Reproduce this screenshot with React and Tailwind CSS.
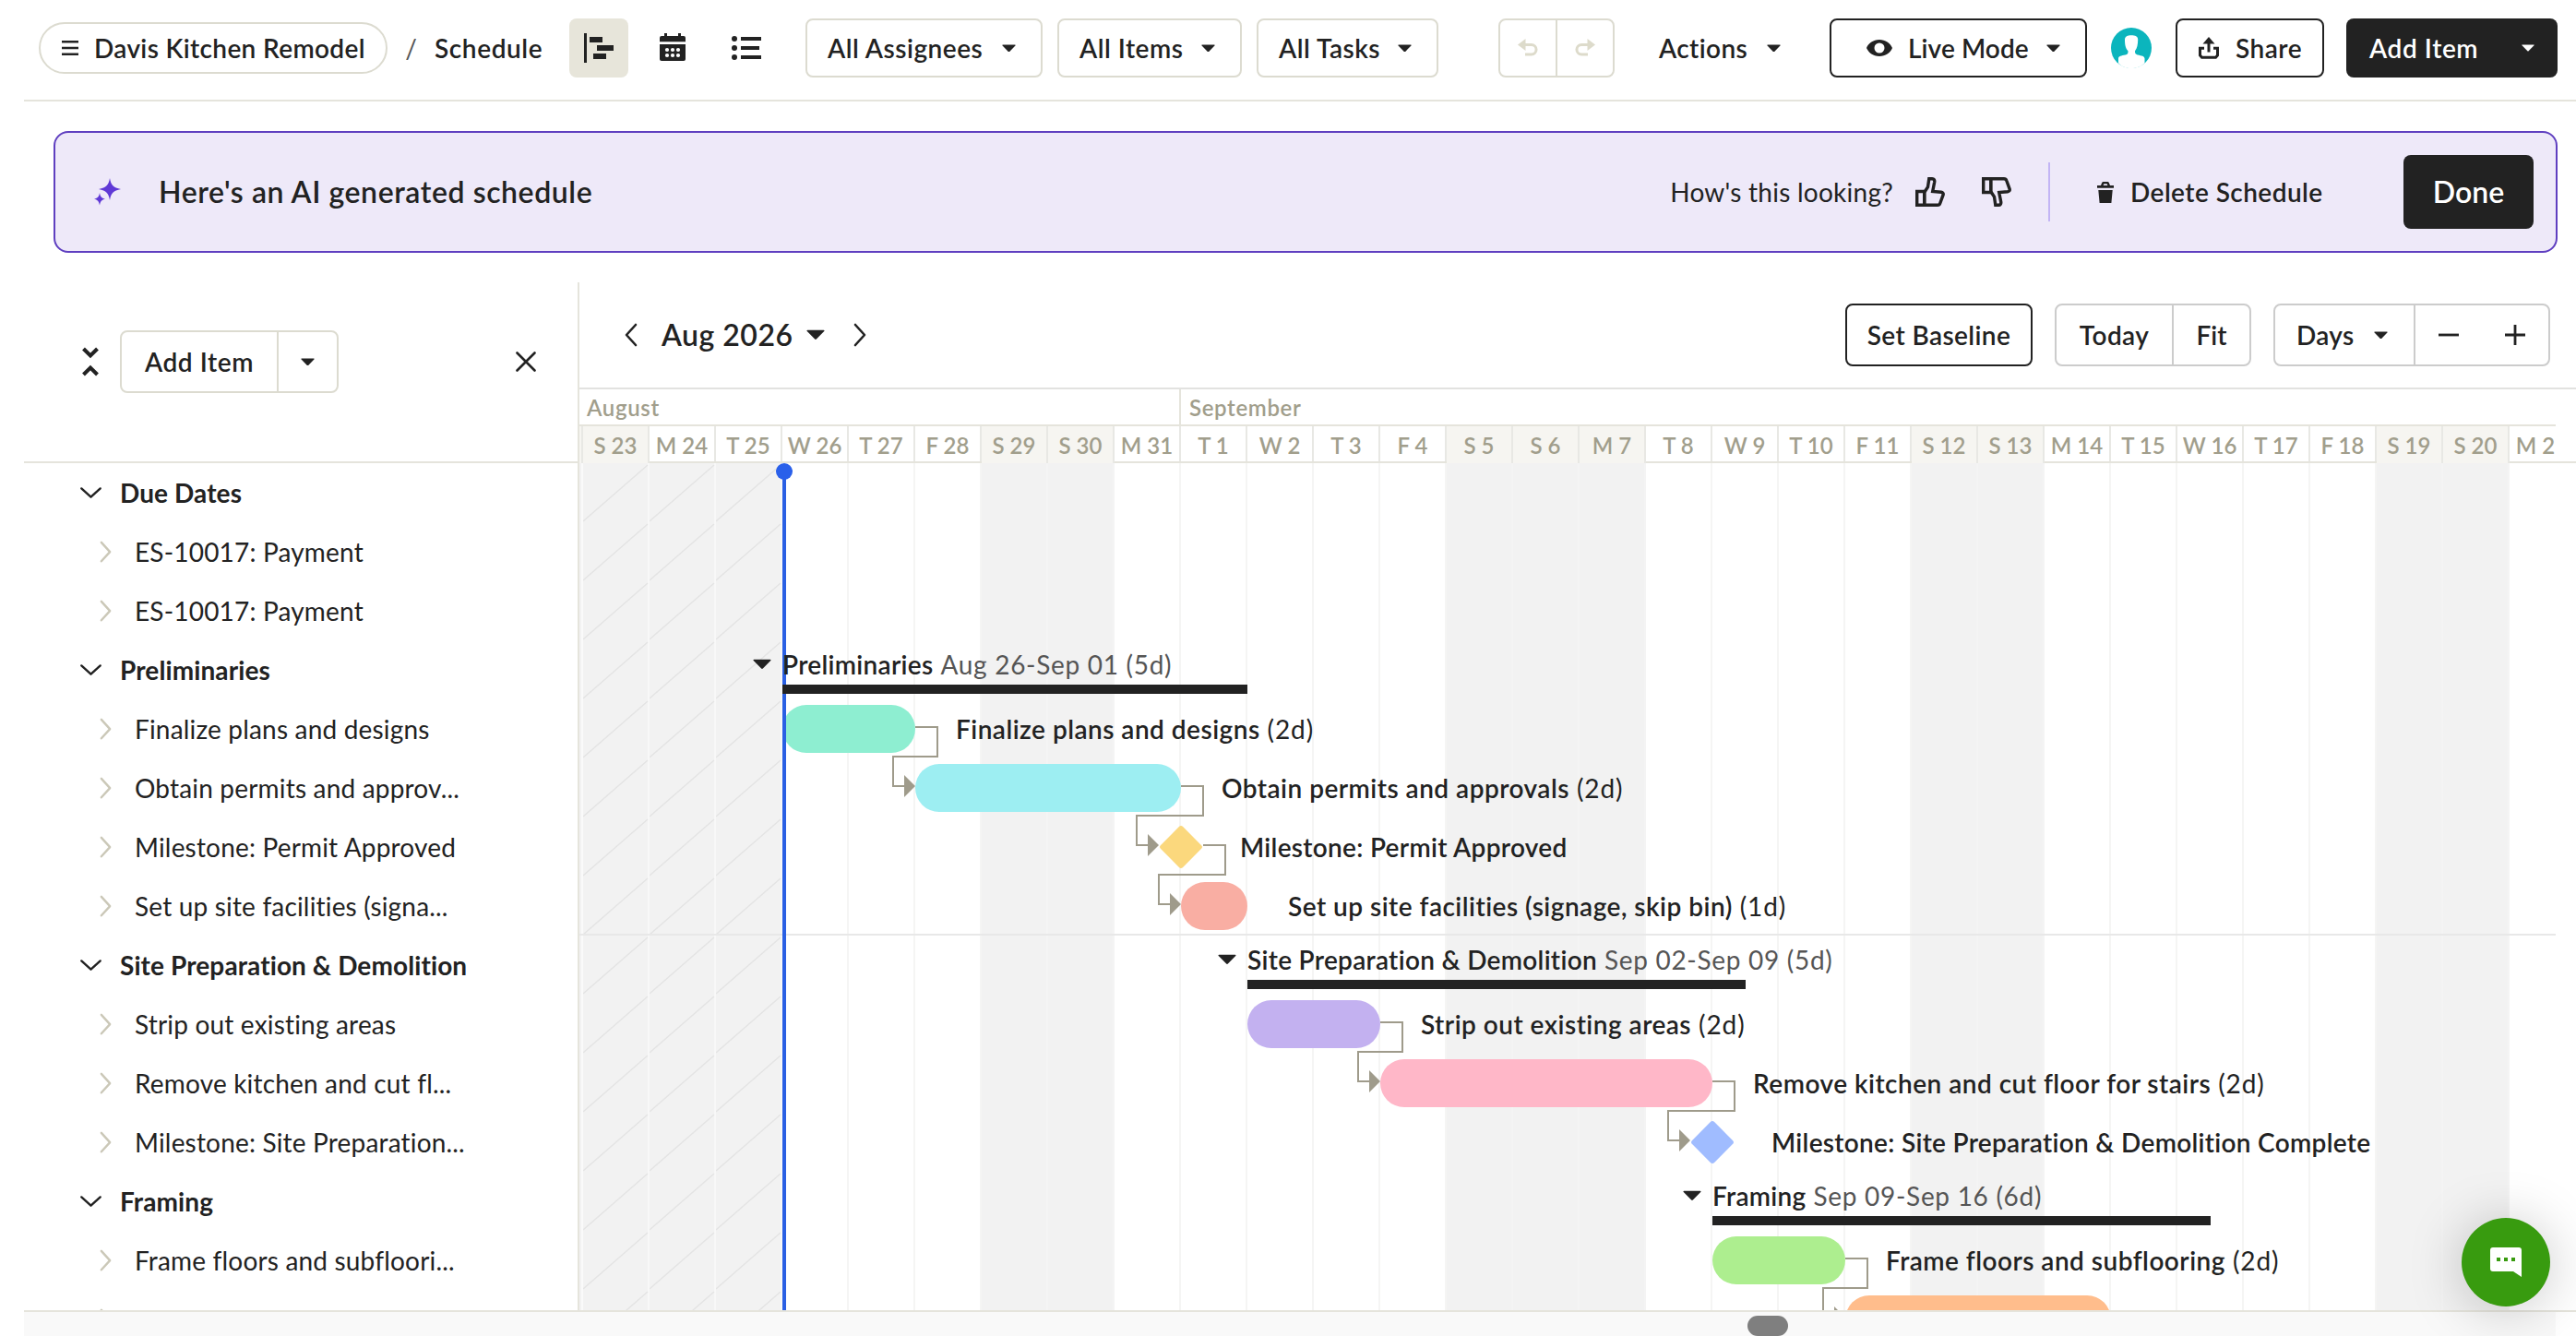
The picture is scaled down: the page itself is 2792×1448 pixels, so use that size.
import clsx from "clsx";

const DAY = 72;
const ROW = 64;

const days = [
  "S 23", "M 24", "T 25", "W 26", "T 27", "F 28", "S 29", "S 30", "M 31",
  "T 1", "W 2", "T 3", "F 4", "S 5", "S 6", "M 7", "T 8", "W 9", "T 10",
  "F 11", "S 12", "S 13", "M 14", "T 15", "W 16", "T 17", "F 18", "S 19",
  "S 20", "M 21",
];
// weekends and Labor Day
const daysOff = [0, 6, 7, 13, 14, 15, 20, 21, 27, 28];

// start and length are in days, counted from S 23
const rows = [
  { type: "group", name: "Due Dates" },
  { type: "item", name: "ES-10017: Payment" },
  { type: "item", name: "ES-10017: Payment" },
  { type: "group", name: "Preliminaries", dates: "Aug 26-Sep 01 (5d)", start: 3, length: 7 },
  { type: "item", name: "Finalize plans and designs", label: "Finalize plans and designs", duration: "(2d)", start: 3, length: 2, color: "bg-[#8eeed1]" },
  { type: "item", name: "Obtain permits and approv...", label: "Obtain permits and approvals", duration: "(2d)", start: 5, length: 4, color: "bg-[#9deef2]" },
  { type: "item", name: "Milestone: Permit Approved", label: "Milestone: Permit Approved", milestone: true, start: 9, color: "bg-[#fbd87d]" },
  { type: "item", name: "Set up site facilities (signa...", label: "Set up site facilities (signage, skip bin)", duration: "(1d)", start: 9, length: 1, color: "bg-[#f9aea3]" },
  { type: "group", name: "Site Preparation & Demolition", dates: "Sep 02-Sep 09 (5d)", start: 10, length: 7.5 },
  { type: "item", name: "Strip out existing areas", label: "Strip out existing areas", duration: "(2d)", start: 10, length: 2, color: "bg-[#c3b1f0]" },
  { type: "item", name: "Remove kitchen and cut fl...", label: "Remove kitchen and cut floor for stairs", duration: "(2d)", start: 12, length: 5, color: "bg-[#ffb7c8]" },
  { type: "item", name: "Milestone: Site Preparation...", label: "Milestone: Site Preparation & Demolition Complete", milestone: true, start: 17, color: "bg-[#a0bcff]" },
  { type: "group", name: "Framing", dates: "Sep 09-Sep 16 (6d)", start: 17, length: 7.5 },
  { type: "item", name: "Frame floors and subfloori...", label: "Frame floors and subflooring", duration: "(2d)", start: 17, length: 2, color: "bg-[#adee8f]" },
  { type: "item", name: "", start: 19, length: 4, color: "bg-[#ffbd8c]" },
];

const links = [4, 5, 6, 9, 10, 13];

const Caret = ({ className = "w-[15px]" }) => (
  <svg viewBox="0 0 16 9" className={clsx("shrink-0", className)} fill="currentColor">
    <path d="M1 .5h14c.7 0 .9.6.4 1L8.7 8.4c-.4.4-1 .4-1.4 0L.6 1.500C.1 1.100.3.5 1 .5z" />
  </svg>
);

const Chevron = ({ className }) => (
  <svg viewBox="0 0 14 26" className={className} fill="none" stroke="currentColor" strokeWidth="2.600" strokeLinecap="round" strokeLinejoin="round">
    <path d="M2 2l10 11L2 24" />
  </svg>
);

const UndoIcon = ({ className }) => (
  <svg viewBox="0 0 22 20" className={clsx("w-[22px]", className)}>
    <path d="M0 6.500L8.500 0v13z" fill="currentColor" />
    <path d="M7 6.500h7.800a5.200 5.200 0 0 1 0 10.500H8" fill="none" stroke="currentColor" strokeWidth="3" />
  </svg>
);

const ThumbIcon = ({ className }) => (
  <svg viewBox="0 0 32 32" className={clsx("w-8", className)} fill="none" stroke="currentColor" strokeWidth="3.400">
    <path d="M1.700 15.500h8v14.800h-8z" />
    <path d="M9.700 16.500l3.800-5.800 1.300-9h3.400c2 0 2.800 1.600 2.500 3.600l-2 10.200 9.200.8c1.800.2 2.700 1.200 2.200 2.900l-3.300 9c-.5 1.500-1.300 2.100-2.800 2.100H9.700z" />
  </svg>
);

const FilterButton = ({ label, className }) => (
  <button className={clsx("flex h-16 items-center justify-between rounded-lg border-2 border-[#dcdbd0] pl-[22px] pr-[27px]", className)}>
    {label}
    <Caret />
  </button>
);

const TopBar = () => (
  <header className="ml-[26px] flex h-[110px] items-start border-b-2 border-[#e5e4dc] pl-4 pt-5 font-semibold">
    <div className="mt-1 flex h-14 w-[378px] shrink-0 items-center rounded-full border-2 border-[#dcdbd0] pl-[23px]">
      <svg viewBox="0 0 18 16" className="mr-[17px] w-[18px]" fill="currentColor">
        <path d="M0 0h18v2.400H0zM0 6.800h18v2.400H0zM0 13.600h18V16H0z" />
      </svg>
      <span className="tracking-[0.350px]">Davis Kitchen Remodel</span>
    </div>
    <span className="flex h-16 w-[51px] items-center justify-center font-normal text-[#555]">/</span>
    <span className="flex h-16 w-[146px] items-center tracking-[0.600px]">Schedule</span>

    <div className="flex gap-4">
      <button className="flex size-16 items-center justify-center rounded-lg bg-[#e7e5da]">
        <svg viewBox="0 0 32 32" className="w-8" fill="currentColor">
          <path d="M0 0h3v32H0zM6 4h14v6H6zM14 13h18v6H14zM10 22h14v6H10z" />
        </svg>
      </button>
      <button className="flex size-16 items-center justify-center">
        <svg viewBox="0 0 28 30" className="mt-[-2px] w-7" fill="currentColor">
          <path d="M5 0h3v3h12V0h3v3h3a2 2 0 0 1 2 2v4.200H0V5a2 2 0 0 1 2-2h3z" />
          <path d="M0 12h28v16a2 2 0 0 1-2 2H2a2 2 0 0 1-2-2z" />
          <g fill="#fff">
            <circle cx="8" cy="18" r="2.100" />
            <circle cx="14" cy="18" r="2.100" />
            <circle cx="20" cy="18" r="2.100" />
            <circle cx="8" cy="24" r="2.100" />
            <circle cx="14" cy="24" r="2.100" />
            <circle cx="20" cy="24" r="2.100" />
          </g>
        </svg>
      </button>
      <button className="flex size-16 items-center justify-center">
        <svg viewBox="0 0 32 26" className="w-8" fill="currentColor">
          <circle cx="3" cy="3" r="3" />
          <circle cx="3" cy="13" r="3" />
          <circle cx="3" cy="23" r="3" />
          <path d="M10 1h22v4H10zM10 11h20v4H10zM10 21h22v4H10z" />
        </svg>
      </button>
    </div>

    <div className="ml-8 flex gap-4 tracking-[0.500px]">
      <FilterButton label="All Assignees" className="w-[257px]" />
      <FilterButton label="All Items" className="w-[200px]" />
      <FilterButton label="All Tasks" className="w-[197px]" />
    </div>

    <div className="ml-[65px] flex h-16 w-[126px] rounded-lg border-2 border-[#dcdbd0] text-[#dddbcb]">
      <button className="flex flex-1 items-center justify-center border-r-2 border-[#dcdbd0]">
        <UndoIcon />
      </button>
      <button className="flex flex-1 items-center justify-center">
        <UndoIcon className="-scale-x-100" />
      </button>
    </div>

    <button className="ml-12 flex h-16 w-[132px] items-center justify-between tracking-[0.400px]">
      Actions
      <Caret />
    </button>

    <button className="ml-[53px] flex h-16 w-[279px] items-center rounded-lg border-2 border-[#222] pl-[38px] pr-[27px]">
      <svg viewBox="0 0 28 18" className="mr-[17px] w-7" fill="currentColor" fillRule="evenodd">
        <path d="M14 0C7.500 0 2.300 3.700 0 9c2.300 5.300 7.500 9 14 9s11.700-3.700 14-9C25.700 3.700 20.500 0 14 0zm0 14.500A5.500 5.500 0 1 1 14 3.500a5.500 5.500 0 0 1 0 11z" />
      </svg>
      <span className="flex-1 text-left tracking-[0.100px]">Live Mode</span>
      <Caret />
    </button>

    <svg viewBox="0 0 44 44" className="ml-[26px] mt-2.5 size-11">
      <circle cx="22" cy="22" r="22" fill="#0bb5bd" />
      <path
        d="M15 13c0-3.500 3-4.800 7-4.800s7.500 1 7.200 5c-.2 5-.7 9-3.200 12 0 2.800.5 3.300 3 4.200 4 1 7.500 1.200 7.500 4.100v4.700C33 41.800 28 44 22 44S11 41.800 8 38.200v-4.700c0-2.900 3.300-3.300 7.500-4.100 2.700-.7 3-1.400 3-4.200-3-3-3.500-7.200-3.500-12.200z"
        fill="#fff"
      />
    </svg>

    <button className="ml-[26px] flex h-16 w-[161px] items-center rounded-lg border-2 border-[#222] pl-[23px]">
      <svg viewBox="0 0 22 24" className="mr-[18px] w-[22px]" fill="none" stroke="currentColor" strokeWidth="3">
        <path d="M11 0l6.500 7.500h-13z" fill="currentColor" stroke="none" />
        <path d="M11 6v10.500M6 12.200H1.500V20l2 2.300h15l2-2.300v-7.800H16" />
      </svg>
      <span className="tracking-[0.500px]">Share</span>
    </button>

    <button className="ml-6 flex h-16 w-[229px] items-center justify-between rounded-lg bg-[#222] pl-[25px] pr-[25px] tracking-[0.600px] text-white">
      Add Item
      <Caret className="w-[14px]" />
    </button>
  </header>
);

const AiBanner = () => (
  <section className="ml-[58px] mr-5 mt-8 flex h-[132px] items-center rounded-2xl border-2 border-[#5f3fc0] bg-[#eee9f9] pl-[41px] pr-6">
    <svg viewBox="0 0 30 30" className="w-[30px] text-[#6039d6]" fill="currentColor">
      <path d="M18 0c1.400 7.800 3.700 10.300 12 12-8.300 1.700-10.600 4.200-12 12-1.400-7.800-3.700-10.300-12-12 8.300-1.700 10.600-4.200 12-12z" />
      <path d="M7 16c.8 4.200 2 5.800 6 6.700-4 .9-5.200 2.500-6 6.700-.8-4.200-2-5.800-6-6.700 4-.9 5.200-2.500 6-6.700z" />
    </svg>
    <h1 className="ml-[41px] text-[32px] font-semibold tracking-[0.570px]">Here's an AI generated schedule</h1>
    <span className="ml-auto tracking-[0.250px]">How's this looking?</span>
    <ThumbIcon className="ml-6" />
    <ThumbIcon className="ml-10 -scale-y-100" />
    <div className="ml-10 h-16 w-0.5 bg-[#c3b5f5]" />
    <svg viewBox="0 0 18 23" className="ml-[51px] w-[18px]" fill="currentColor">
      <path d="M4 4l1.200-3C5.500.3 6 0 6.700 0h4.600c.7 0 1.200.3 1.500 1L14 4h4v2.800H0V4zm2.600 0h4.800l-.8-1.700H7.400zM1.300 9h15.400l-1.300 14H2.600z" fillRule="evenodd" />
    </svg>
    <span className="ml-[18px] w-[296px] font-semibold tracking-[0.450px]">Delete Schedule</span>
    <button className="h-20 w-[141px] rounded-lg bg-[#222] text-[32px] font-semibold text-white">Done</button>
  </section>
);

const SidebarRow = ({ row }) =>
  row.type === "group" ? (
    <div className="flex h-16 shrink-0 items-center pl-[60px] font-bold tracking-[0.100px]">
      <span className="flex w-[44px] items-center">
        <Chevron className="ml-[6px] w-[13px] rotate-90" />
      </span>
      {row.name}
    </div>
  ) : (
    <div className="flex h-16 shrink-0 items-center pl-[82px] tracking-[0.180px]">
      <Chevron className="mr-[25px] w-[13px] text-[#cbc8b8]" />
      {row.name}
    </div>
  );

const Sidebar = () => (
  <aside className="flex w-[602px] shrink-0 flex-col border-r-2 border-[#e5e4dc]">
    <div className="flex h-[196px] shrink-0 items-center border-b-2 border-[#e5e4dc] pb-[22px] pl-[63px] pr-[45px]">
      <svg viewBox="0 0 18 32" className="w-[18px]" fill="none" stroke="currentColor" strokeWidth="4">
        <path d="M1.500 2L9 9.500 16.500 2M1.500 30L9 22.500l7.500 7.500" />
      </svg>
      <div className="ml-[23px] flex h-[68px] w-[237px] rounded-lg border-2 border-[#dcdbd0] font-semibold">
        <button className="w-[170px] border-r-2 border-[#dcdbd0] tracking-[0.600px]">Add Item</button>
        <button className="flex flex-1 items-center justify-center">
          <Caret />
        </button>
      </div>
      <svg viewBox="0 0 22 22" className="ml-auto w-[22px]" fill="none" stroke="currentColor" strokeWidth="2.600" strokeLinecap="round">
        <path d="M1.500 1.500l19 19M20.500 1.500l-19 19" />
      </svg>
    </div>
    {rows.map((row, i) => (
      <SidebarRow key={i} row={row} />
    ))}
  </aside>
);

const TimelineToolbar = () => (
  <div className="flex h-[116px] shrink-0 items-center border-b-2 border-[#e2e2e0] pl-[49px] pr-7 font-semibold">
    <Chevron className="w-[14px] rotate-180" />
    <span className="ml-[26px] text-[32px] tracking-[0.500px]">Aug 2026</span>
    <Caret className="ml-[14px] w-5" />
    <Chevron className="ml-[31px] w-[14px]" />
    <button className="ml-auto h-[68px] w-[203px] rounded-lg border-2 border-[#222] tracking-[0.400px]">Set Baseline</button>
    <div className="ml-6 flex h-[68px] w-[213px] rounded-lg border-2 border-[#ccc]">
      <button className="w-[127px] border-r-2 border-[#ccc] tracking-[0.400px]">Today</button>
      <button className="flex-1">Fit</button>
    </div>
    <div className="ml-6 flex h-[68px] w-[300px] rounded-lg border-2 border-[#ccc]">
      <button className="flex w-[152px] items-center justify-between border-r-2 border-[#ccc] pl-[23px] pr-[28px] tracking-[0.300px]">
        Days
        <Caret />
      </button>
      <button className="flex flex-1 items-center justify-center">
        <svg viewBox="0 0 22 22" className="w-[22px]" fill="currentColor">
          <path d="M0 9.600h22v2.800H0z" />
        </svg>
      </button>
      <button className="flex flex-1 items-center justify-center">
        <svg viewBox="0 0 22 22" className="w-[22px]" fill="currentColor">
          <path d="M0 9.600h9.600V0h2.800v9.600H22v2.800h-9.600V22H9.600v-9.600H0z" />
        </svg>
      </button>
    </div>
  </div>
);

const TimelineHeader = () => (
  <div className="shrink-0 border-b-2 border-[#e5e4dc] text-[24px] font-semibold text-[#a19e8c]">
    <div className="mr-[22px] flex h-10 border-b-2 border-[#e5e4dc] tracking-[0.650px]">
      <div className="flex w-[652px] items-center border-r-2 border-[#e5e4dc] pl-2 pt-0.5">August</div>
      <div className="flex items-center pl-[9px] pt-0.5">September</div>
    </div>
    <div className="-mb-0.5 mr-[22px] flex h-10 overflow-hidden">
      <div className="w-1 shrink-0 border-r-2 border-[#e8e8e4] bg-[#f6f5f1]" />
      {days.map((day, i) => (
        <div
          key={day}
          className={clsx(
            "flex w-[72px] shrink-0 items-center justify-center whitespace-nowrap border-r-2 border-[#e8e8e4]",
            daysOff.includes(i) ? "bg-[#f6f5f1] pt-0.5" : "mb-0.5 pt-1"
          )}
        >
          {day}
        </div>
      ))}
    </div>
  </div>
);

const DayColumns = () => (
  <div className="absolute inset-y-0 left-0 right-[22px] flex overflow-hidden">
    <div className="w-1 shrink-0 border-r-2 border-[#fafafa] bg-[#f2f2f2]" />
    {days.map((day, i) => (
      <div
        key={day}
        className={clsx(
          "w-[72px] shrink-0 border-r-2",
          i < 3 ? "border-[#f8f8f8] bg-[#f2f2f2]" : daysOff.includes(i) ? "border-[#f4f4f4] bg-[#f2f2f2]" : "border-[#f5f5f4]"
        )}
      />
    ))}
  </div>
);

// diagonal hatch over the days that have passed
const PastHatch = () => (
  <svg className="absolute left-1 top-0 h-full w-[216px]">
    <pattern id="hatch" width={DAY} height={ROW} patternUnits="userSpaceOnUse">
      <path d="M0 63L70 2" stroke="#e4e4e4" strokeWidth="1.600" />
    </pattern>
    <rect width="100%" height="100%" fill="url(#hatch)" />
  </svg>
);

const Links = () => (
  <svg className="absolute left-1 top-0 h-full w-full">
    {links.map((i) => {
      const from = rows[i];
      const to = rows[i + 1];
      const x1 = from.start * DAY + (from.milestone ? 24 : from.length * DAY);
      const x2 = to.start * DAY - (to.milestone ? 24 : 0);
      const y = i * ROW + 30;
      return (
        <g key={i}>
          <path d={`M${x1} ${y}H${x1 + 24}V${y + 32}H${x2 - 24}V${y + 64}H${x2 - 10}`} fill="none" stroke="#9f9b8b" strokeWidth="2" />
          <path d={`M${x2 - 12} ${y + 52}L${x2} ${y + 64}L${x2 - 12} ${y + 76}z`} fill="#9f9b8b" />
        </g>
      );
    })}
  </svg>
);

const TimelineRow = ({ row }) => {
  if (row.start === undefined) return <div className="h-16" />;

  if (row.type === "group") {
    return (
      <div className="relative z-20 h-16 pt-1.5" style={{ paddingLeft: row.start * DAY - 28 }}>
        <div className="flex h-10 items-center whitespace-nowrap">
          <Caret className="mr-3 w-5" />
          <span className="font-semibold tracking-[0.300px]">{row.name}</span>
          <span className="ml-2 tracking-[0.700px] text-[#555]">{row.dates}</span>
        </div>
        <div className="ml-8 mt-0.5 h-2.5 bg-[#222]" style={{ width: row.length * DAY }} />
      </div>
    );
  }

  return (
    <div className="flex h-16 items-center whitespace-nowrap" style={{ marginLeft: row.start * DAY + 4 }}>
      {row.milestone ? (
        <div className={clsx("-ml-[17px] mr-[47px] size-[34px] shrink-0 rotate-45 rounded-[3px]", row.color)} />
      ) : (
        <div className={clsx("mr-11 h-[52px] shrink-0 rounded-full", row.color)} style={{ width: row.length * DAY }} />
      )}
      <span className={clsx("font-semibold", row.milestone ? "tracking-[0.300px]" : "tracking-[0.480px]")}>{row.label}</span>
      {row.duration && <span className="ml-2 tracking-[0.900px]">{row.duration}</span>}
    </div>
  );
};

const Timeline = () => (
  <main className="flex min-w-0 flex-1 flex-col">
    <TimelineToolbar />
    <TimelineHeader />
    <div className="relative min-h-0 flex-1">
      <DayColumns />
      <PastHatch />
      <div className="absolute left-0 right-[22px] top-[510px] h-0.5 bg-[#e8e8e8]" />
      <Links />
      <div className="relative">
        {rows.map((row, i) => (
          <TimelineRow key={i} row={row} />
        ))}
      </div>
      {/* today marker */}
      <div className="absolute bottom-0 left-[220px] top-2 z-10 w-1 bg-[#2a60e4]" />
      <div className="absolute left-[213px] top-0 z-10 size-[18px] rounded-full bg-[#2a60ea]" />
    </div>
  </main>
);

const ChatButton = () => (
  <button className="absolute bottom-8 right-7 z-30 flex size-24 items-center justify-center rounded-full bg-[#389b0f] shadow-[0_4px_60px_rgba(0,0,0,0.22)]">
    <svg viewBox="0 0 34 32" className="w-[34px]">
      <path d="M3 0h28a3 3 0 0 1 3 3v29l-9-6H3a3 3 0 0 1-3-3V3a3 3 0 0 1 3-3z" fill="#fff" />
      <path d="M7 11h4v4H7zM15 11h4v4h-4zM23 11h4v4h-4z" fill="#389b0f" />
    </svg>
  </button>
);

export default function App() {
  return (
    <div className="relative flex h-[1448px] w-[2792px] flex-col overflow-hidden bg-white font-['Lato',sans-serif] text-[28px] leading-none text-[#222]">
      <TopBar />
      <AiBanner />
      <div className="ml-[26px] mt-8 flex h-[1114px] overflow-hidden">
        <Sidebar />
        <Timeline />
      </div>
      <div className="ml-[26px] h-7 border-t-2 border-[#e5e4dc]">
        <div className="mr-[22px] h-full bg-[#f9f9f9] pl-[1868px] pt-1">
          <div className="h-[22px] w-11 rounded-full bg-[#7f7f7f]" />
        </div>
      </div>
      <ChatButton />
    </div>
  );
}
